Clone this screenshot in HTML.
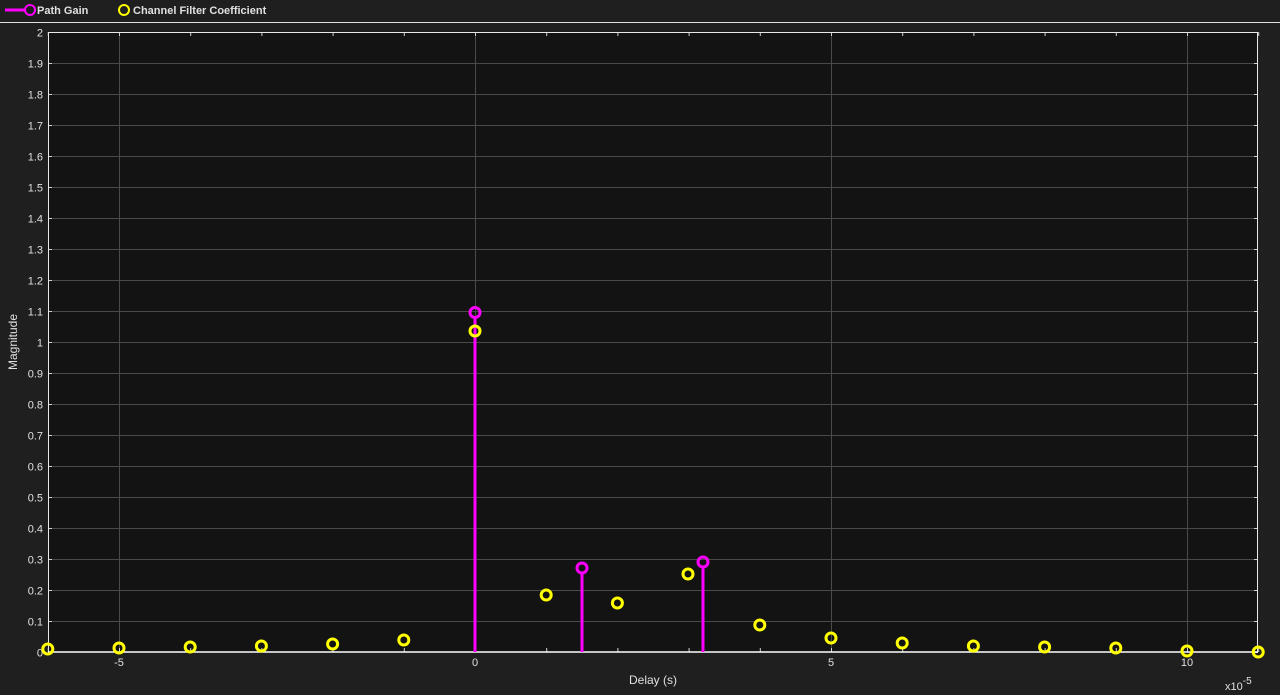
<!DOCTYPE html>
<html><head><meta charset="utf-8"><style>
html,body{margin:0;padding:0;background:#1f1f1f;width:1280px;height:695px;overflow:hidden}
svg text{font-family:"Liberation Sans",sans-serif;fill:#e0e0e0}
</style></head><body>
<svg width="1280" height="695" xmlns="http://www.w3.org/2000/svg">
<rect width="1280" height="695" fill="#1f1f1f"/>
<line x1="5" y1="10" x2="26" y2="10" stroke="#ff00ff" stroke-width="3"/>
<circle cx="30" cy="10" r="5" fill="none" stroke="#ff00ff" stroke-width="2"/>
<text x="37" y="14" font-size="11" font-weight="bold">Path Gain</text>
<circle cx="124" cy="10" r="5" fill="none" stroke="#ffff00" stroke-width="2"/>
<text x="133" y="14" font-size="11" font-weight="bold">Channel Filter Coefficient</text>
<line x1="0" y1="22.5" x2="1280" y2="22.5" stroke="#e0e0e0" stroke-width="1"/>
<rect x="48" y="32" width="1210" height="620" fill="#131313"/>
<g stroke="#4a4a4a" stroke-width="1" id="grid"></g>
<g id="ticks" stroke="#cfcfcf" stroke-width="1"></g>
<g id="labels" font-size="11" text-anchor="end"></g>
<rect x="48.5" y="32.5" width="1209" height="619.5" fill="none" stroke="#e8e8e8" stroke-width="1"/>
<line x1="48" y1="652" x2="1258" y2="652" stroke="#ffffff" stroke-width="1.5"/>
<g font-size="11" text-anchor="middle">
<text x="119" y="666">-5</text><text x="475" y="666">0</text><text x="831" y="666">5</text><text x="1187" y="666">10</text>
</g>
<text x="653" y="684" font-size="12" text-anchor="middle">Delay (s)</text>
<text x="1225" y="690" font-size="11">x10<tspan dy="-6" font-size="10">-5</tspan></text>
<text transform="translate(17,342) rotate(-90)" font-size="12" text-anchor="middle">Magnitude</text>
<g id="stems" stroke="#ff00ff" stroke-width="3">
<line x1="475" y1="652" x2="475" y2="316"/>
<line x1="582" y1="652" x2="582" y2="572"/>
<line x1="703" y1="652" x2="703" y2="566"/>
</g>
<g fill="none" stroke="#ff00ff" stroke-width="3">
<circle cx="475" cy="312.5" r="5"/><circle cx="582" cy="568" r="5"/><circle cx="703" cy="562" r="5"/>
</g>
<g id="yel" fill="none" stroke="#ffff00" stroke-width="3"></g>
</svg>
<script>
var ns="http://www.w3.org/2000/svg";
function el(p,t,a){var e=document.createElementNS(ns,t);for(var k in a)e.setAttribute(k,a[k]);document.getElementById(p).appendChild(e);return e;}
for(var i=1;i<20;i++){var y=652-i*31+0.5;el("grid","line",{x1:48,x2:1258,y1:y,y2:y});}
[-5,0,5,10].forEach(function(v){var x=475+v*71.2+0.5;el("grid","line",{x1:x,x2:x,y1:32,y2:652});});
for(var v=-6;v<=11;v++){var x=475+v*71.2+0.5;el("ticks","line",{x1:x,x2:x,y1:32,y2:36});el("ticks","line",{x1:x,x2:x,y1:648,y2:652});}
for(var i=0;i<=20;i++){var y=652-i*31+0.5;el("ticks","line",{x1:48,x2:52,y1:y,y2:y});el("ticks","line",{x1:1254,x2:1258,y1:y,y2:y});
var t=el("labels","text",{x:43,y:y+4});t.textContent=(i==0?"0":(i%10==0?String(i/10):(i/10).toFixed(1)));}
var ys={"-6":649,"-5":648,"-4":647,"-3":646,"-2":644,"-1":640,"0":331,"1":595,"2":603,"3":574,"4":625,"5":638,"6":643,"7":646,"8":647,"9":648,"10":651,"11":652};
for(var k in ys){var x=475+(+k)*71.2;if(k=="3")x=688;el("yel","circle",{cx:x,cy:ys[k],r:5});}
</script>
</body></html>
